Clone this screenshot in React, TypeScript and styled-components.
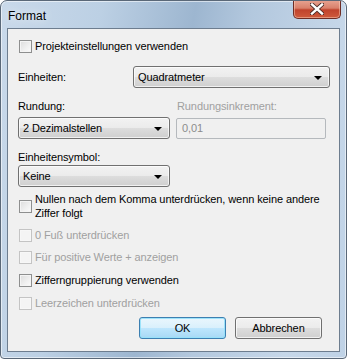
import React from "react";
import styled, { createGlobalStyle } from "styled-components";

const GlobalStyle = createGlobalStyle`
  html, body {
    margin: 0;
    padding: 0;
    background: #ffffff;
  }
  body {
    font-family: "Liberation Sans", Arial, sans-serif;
    font-size: 11px;
    letter-spacing: -0.1px;
    color: #000;
  }
`;

const Window = styled.div`
  width: 347px;
  height: 359px;
  box-sizing: border-box;
  display: flex;
  flex-direction: column;
  padding: 0 6px 6px 6px;
  border-radius: 7px 7px 4px 4px;
  border: 1px solid #5a6878;
  overflow: hidden;
  background: linear-gradient(
    100deg,
    #c9d9ea 0%,
    #bcd0e4 25%,
    #9db6d0 48%,
    #b3c8de 62%,
    #c6d7e9 85%,
    #bfd2e6 100%
  );
  box-shadow: inset 0 0 0 1px rgba(255, 255, 255, 0.55);
`;

const TitleBar = styled.div`
  height: 27px;
  flex: none;
  display: flex;
  align-items: flex-start;
  justify-content: space-between;
`;

const Title = styled.span`
  font-size: 12px;
  letter-spacing: 0;
  margin-top: 8px;
  margin-left: 1px;
  color: #000;
  text-shadow: 0 0 8px rgba(255, 255, 255, 0.9);
`;

const CloseButton = styled.div`
  width: 48px;
  height: 19px;
  margin-top: -1px;
  margin-right: -1px;
  box-sizing: border-box;
  border: 1px solid #6e2d25;
  border-top: none;
  border-radius: 0 0 5px 5px;
  background: linear-gradient(
    180deg,
    #e8a593 0%,
    #d9806b 45%,
    #c0432c 55%,
    #cf5a3c 100%
  );
  box-shadow: inset 0 0 0 1px rgba(255, 220, 200, 0.45);
  display: flex;
  align-items: center;
  justify-content: center;
`;

const Client = styled.div`
  flex: 1;
  min-height: 0;
  box-sizing: border-box;
  background: #f0f0f0;
  border: 1px solid #6d7d8f;
  padding: 10px 11px 0 10px;
  display: flex;
  flex-direction: column;
  white-space: nowrap;
`;

const CheckRow = styled.label<{ $top: number; $disabled?: boolean }>`
  display: flex;
  align-items: center;
  gap: 3px;
  margin-top: ${(p) => p.$top}px;
  padding-left: 1px;
  line-height: 14px;
  color: ${(p) => (p.$disabled ? "#a0a0a0" : "#000")};
`;

const Box = styled.span<{ $disabled?: boolean }>`
  width: 13px;
  height: 13px;
  flex: none;
  box-sizing: border-box;
  border: 1px solid ${(p) => (p.$disabled ? "#c4c4c4" : "#8e8f8f")};
  background: ${(p) =>
    p.$disabled
      ? "#f4f4f4"
      : "linear-gradient(135deg, #dcdcdc 0%, #f0f0f0 60%, #fbfbfb 100%)"};
  box-shadow: inset 0 0 0 1px
    ${(p) => (p.$disabled ? "#f7f7f7" : "#f4f4f4")};
`;

const Row = styled.div<{ $top: number }>`
  display: flex;
  align-items: center;
  margin-top: ${(p) => p.$top}px;
`;

const Label = styled.span<{ $disabled?: boolean; $width?: number }>`
  line-height: 14px;
  width: ${(p) => (p.$width ? `${p.$width}px` : "auto")};
  flex: none;
  color: ${(p) => (p.$disabled ? "#a0a0a0" : "#000")};
`;

const Select = styled.div<{ $width: number }>`
  width: ${(p) => p.$width}px;
  height: 22px;
  box-sizing: border-box;
  border: 1px solid #707070;
  border-radius: 3px;
  background: linear-gradient(
    180deg,
    #f2f2f2 0%,
    #ebebeb 50%,
    #dddddd 51%,
    #cfcfcf 100%
  );
  box-shadow: inset 0 0 0 1px rgba(255, 255, 255, 0.7);
  display: flex;
  align-items: center;
  justify-content: space-between;
  padding: 0 7px 0 4px;
  flex: none;
`;

const Arrow = styled.span`
  width: 0;
  height: 0;
  border-left: 4px solid transparent;
  border-right: 4px solid transparent;
  border-top: 4px solid #000;
  margin-top: 1px;
`;

const TextField = styled.div`
  width: 150px;
  height: 21px;
  box-sizing: border-box;
  border: 1px solid #b5b9bd;
  border-radius: 2px;
  background: #f0f0f0;
  color: #8c8c8c;
  display: flex;
  align-items: center;
  padding-left: 5px;
  margin-left: 6px;
`;

const Buttons = styled.div`
  display: flex;
  justify-content: flex-end;
  gap: 9px;
  margin-top: 7px;
  padding-right: 6px;
`;

const Button = styled.div<{ $default?: boolean }>`
  width: 87px;
  height: 22px;
  box-sizing: border-box;
  border-radius: 3px;
  display: flex;
  align-items: center;
  justify-content: center;
  border: 1px solid ${(p) => (p.$default ? "#3c7fb1" : "#707070")};
  background: ${(p) =>
    p.$default
      ? "linear-gradient(180deg, #eaf6fd 0%, #d9f0fc 50%, #bee6fd 51%, #a7d9f5 100%)"
      : "linear-gradient(180deg, #f2f2f2 0%, #ebebeb 50%, #dddddd 51%, #cfcfcf 100%)"};
  box-shadow: inset 0 0 0 1px
    ${(p) => (p.$default ? "rgba(150, 225, 250, 0.9)" : "rgba(255,255,255,0.7)")};
`;

const Check = ({
  text,
  top,
  disabled,
}: {
  text: React.ReactNode;
  top: number;
  disabled?: boolean;
}) => (
  <CheckRow $top={top} $disabled={disabled}>
    <Box $disabled={disabled} />
    <span>{text}</span>
  </CheckRow>
);

export default function App() {
  return (
    <>
      <GlobalStyle />
      <Window>
        <TitleBar>
          <Title>Format</Title>
          <CloseButton>
            <svg width="14" height="12" viewBox="0 0 14 12">
              <path
                d="M2 1.5 L12 10.5 M12 1.5 L2 10.5"
                stroke="#4a2a26"
                strokeWidth="4.2"
                strokeLinecap="square"
              />
              <path
                d="M2 1.5 L12 10.5 M12 1.5 L2 10.5"
                stroke="#ffffff"
                strokeWidth="2.4"
                strokeLinecap="square"
              />
            </svg>
          </CloseButton>
        </TitleBar>
        <Client>
          <Check top={0} text="Projekteinstellungen verwenden" />
          <Row $top={13}>
            <Label $width={115}>Einheiten:</Label>
            <Select $width={197}>
              <span>Quadratmeter</span>
              <Arrow />
            </Select>
          </Row>
          <Row $top={11}>
            <Label $width={159}>Rundung:</Label>
            <Label $disabled>Rundungsinkrement:</Label>
          </Row>
          <Row $top={4}>
            <Select $width={152}>
              <span>2 Dezimalstellen</span>
              <Arrow />
            </Select>
            <TextField>0,01</TextField>
          </Row>
          <Row $top={11}>
            <Label>Einheitensymbol:</Label>
          </Row>
          <Row $top={1}>
            <Select $width={152}>
              <span>Keine</span>
              <Arrow />
            </Select>
          </Row>
          <Check
            top={5}
            text={
              <>
                Nullen nach dem Komma unterdrücken, wenn keine andere
                <br />
                Ziffer folgt
              </>
            }
          />
          <Check top={8} disabled text="0 Fuß unterdrücken" />
          <Check top={8} disabled text="Für positive Werte + anzeigen" />
          <Check top={9} text="Zifferngruppierung verwenden" />
          <Check top={9} disabled text="Leerzeichen unterdrücken" />
          <Buttons>
            <Button $default>OK</Button>
            <Button>Abbrechen</Button>
          </Buttons>
        </Client>
      </Window>
    </>
  );
}
